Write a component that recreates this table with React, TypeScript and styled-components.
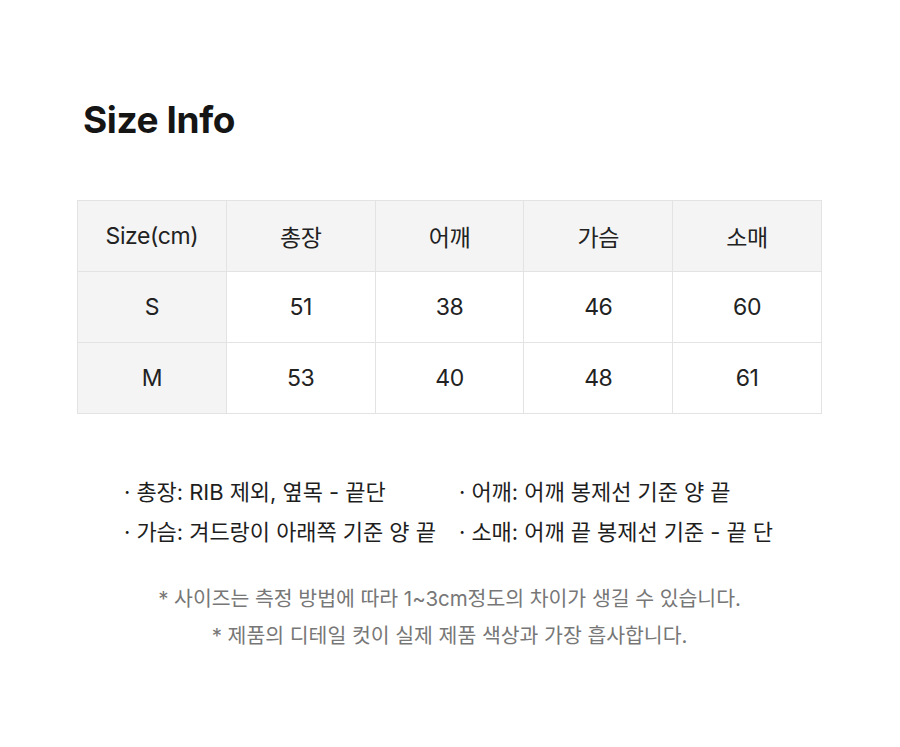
import styled, { createGlobalStyle } from "styled-components";

const GlobalStyle = createGlobalStyle`
  body {
    margin: 0;
    background: #fff;
    font-family: Inter, "Noto Sans CJK KR", sans-serif;
    color: #1a1a1a;
  }
`;

const columns = ["Size(cm)", "총장", "어깨", "가슴", "소매"];
const rows = [
  ["S", "51", "38", "46", "60"],
  ["M", "53", "40", "48", "61"],
];

const notes = [
  ["· 총장: RIB 제외, 옆목 - 끝단", "· 어깨: 어깨 봉제선 기준 양 끝"],
  ["· 가슴: 겨드랑이 아래쪽 기준 양 끝", "· 소매: 어깨 끝 봉제선 기준 - 끝 단"],
];

export default function App() {
  return (
    <Page>
      <GlobalStyle />
      <Title>Size Info</Title>
      <Table>
        <thead>
          <tr>
            {columns.map((c) => (
              <Cell as="th" key={c} $shaded>
                {c}
              </Cell>
            ))}
          </tr>
        </thead>
        <tbody>
          {rows.map((r) => (
            <tr key={r[0]}>
              {r.map((v, i) => (
                <Cell key={i} $shaded={i === 0}>
                  {v}
                </Cell>
              ))}
            </tr>
          ))}
        </tbody>
      </Table>
      <Notes>
        {notes.flat().map((n) => (
          <Note key={n}>{n}</Note>
        ))}
      </Notes>
      <Disclaimer>
        <p>* 사이즈는 측정 방법에 따라 1~3cm정도의 차이가 생길 수 있습니다.</p>
        <p>* 제품의 디테일 컷이 실제 제품 색상과 가장 흡사합니다.</p>
      </Disclaimer>
    </Page>
  );
}

const Page = styled.div`
  width: 900px;
  height: 747px;
  box-sizing: border-box;
  padding: 96px 78px 0 77px;
`;

const Title = styled.h1`
  margin: 0 0 0 6px;
  font-size: 37px;
  font-weight: 700;
  letter-spacing: -0.4px;
  line-height: 48px;
  color: #151515;
`;

const Table = styled.table`
  margin-top: 56px;
  width: 745px;
  border-collapse: collapse;
  table-layout: fixed;
`;

const Cell = styled.td<{ $shaded?: boolean }>`
  height: 70px;
  padding: 0;
  border: 1px solid #e3e3e3;
  background: ${(p) => (p.$shaded ? "#f4f4f4" : "#fff")};
  text-align: center;
  vertical-align: middle;
  font-size: 23px;
  font-weight: 400;
  letter-spacing: -0.4px;
  color: #222;
`;

const Notes = styled.div`
  display: grid;
  grid-template-columns: 335px auto;
  row-gap: 9px;
  margin: 63px 0 0 47px;
`;

const Note = styled.div`
  font-size: 22px;
  line-height: 31px;
  letter-spacing: -0.05px;
  color: #1e1e1e;
  white-space: nowrap;
`;

const Disclaimer = styled.div`
  margin-top: 32px;
  text-align: center;
  color: #777;
  font-size: 20.5px;
  letter-spacing: -0.05px;
  line-height: 37px;
  p {
    margin: 0;
  }
`;
